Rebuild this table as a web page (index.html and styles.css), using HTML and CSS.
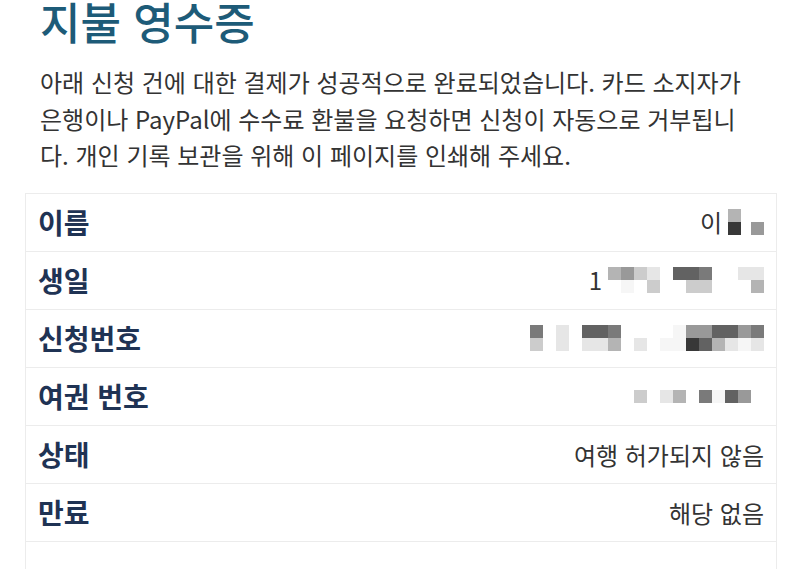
FILE: index.html
```html
<!DOCTYPE html>
<html lang="ko">
<head>
<meta charset="utf-8">
<link rel="stylesheet" href="styles.css">
</head>
<body>
<div class="page">
  <h1 class="title">지불 영수증</h1>
  <p class="intro">아래 신청 건에 대한 결제가 성공적으로 완료되었습니다. 카드 소지자가 은행이나 PayPal에 수수료 환불을 요청하면 신청이 자동으로 거부됩니다. 개인 기록 보관을 위해 이 페이지를 인쇄해 주세요.</p>
  <div class="table">
    <div class="row">
      <div class="label">이름</div>
      <div class="value">
        <span class="txt">이</span>
        <span class="mosaic m2">
          <i class="s3"></i><i></i>
          <i class="s7"></i><i class="s4"></i>
        </span>
      </div>
    </div>
    <div class="row">
      <div class="label">생일</div>
      <div class="value">
        <span class="txt">1</span>
        <span class="mosaic m12">
          <i class="s3"></i><i class="s4"></i><i class="s2"></i><i class="s1"></i><i></i><i class="s6"></i><i class="s6"></i><i class="s5"></i><i></i><i></i><i class="s1"></i><i class="s1"></i>
          <i></i><i class="s0"></i><i></i><i class="s2"></i><i></i><i></i><i class="s2"></i><i class="s2"></i><i></i><i></i><i></i><i class="s3"></i>
        </span>
      </div>
    </div>
    <div class="row">
      <div class="label">신청번호</div>
      <div class="value">
        <span class="mosaic m18">
          <i class="s5"></i><i></i><i class="s1"></i><i></i><i class="s6"></i><i class="s6"></i><i class="s5"></i><i></i><i></i><i></i><i></i><i class="s0"></i><i class="s4"></i><i class="s4"></i><i class="s6"></i><i class="s6"></i><i class="s4"></i><i class="s5"></i>
          <i class="s2"></i><i></i><i class="s1"></i><i></i><i class="s1"></i><i class="s1"></i><i class="s3"></i><i></i><i class="s1"></i><i></i><i class="s0"></i><i class="s0"></i><i class="s7"></i><i class="s6"></i><i class="s3"></i><i class="s1"></i><i class="s0"></i><i class="s1"></i>
        </span>
      </div>
    </div>
    <div class="row">
      <div class="label">여권 번호</div>
      <div class="value">
        <span class="mosaic m10">
          <i class="s2"></i><i></i><i class="s1"></i><i class="s3"></i><i></i><i class="s5"></i><i class="s0"></i><i class="s6"></i><i class="s4"></i><i></i>
        </span>
      </div>
    </div>
    <div class="row">
      <div class="label">상태</div>
      <div class="value">여행 허가되지 않음</div>
    </div>
    <div class="row">
      <div class="label">만료</div>
      <div class="value">해당 없음</div>
    </div>
    <div class="row empty"></div>
  </div>
</div>
</body>
</html>
```

FILE: styles.css
```css
html, body {
  margin: 0;
  padding: 0;
  background: #ffffff;
}

body {
  font-family: "Noto Sans CJK KR", "Noto Sans", sans-serif;
  color: #333333;
}

.page {
  padding: 0 24px 0 25px;
}

.title {
  margin: 0 0 0 15px;
  font-size: 44px;
  line-height: 42px;
  font-weight: 500;
  color: #1d5b78;
}

.intro {
  margin: 22px 0 0 15px;
  width: 718px;
  font-size: 24px;
  line-height: 36.5px;
  color: #333333;
}

.table {
  margin-top: 19px;
  width: 750px;
  border: 1px solid #ececec;
  border-bottom: none;
}

.row {
  display: flex;
  align-items: center;
  justify-content: space-between;
  height: 57px;
  padding: 0 12px;
  border-top: 1px solid #ececec;
}

.row:first-child {
  border-top: none;
}

.label {
  font-size: 28px;
  font-weight: 700;
  color: #1f3354;
}

.value {
  display: flex;
  align-items: center;
  gap: 6px;
  font-size: 24px;
  color: #333333;
}

.txt {
  line-height: 1;
}

.mosaic {
  display: grid;
  grid-auto-rows: 13px;
  grid-template-columns: repeat(var(--cols), 13px);
}

.m2 { --cols: 2; column-gap: 10px; }
.m12 { --cols: 12; }
.m18 { --cols: 18; }
.m10 { --cols: 10; }

.mosaic i {
  display: block;
}

.s0 { background: #f6f6f6; }
.s1 { background: #e6e6e6; }
.s2 { background: #cccccc; }
.s3 { background: #b4b4b4; }
.s4 { background: #999999; }
.s5 { background: #7a7a7a; }
.s6 { background: #626262; }
.s7 { background: #383838; }

.empty {
  height: 60px;
}
```
